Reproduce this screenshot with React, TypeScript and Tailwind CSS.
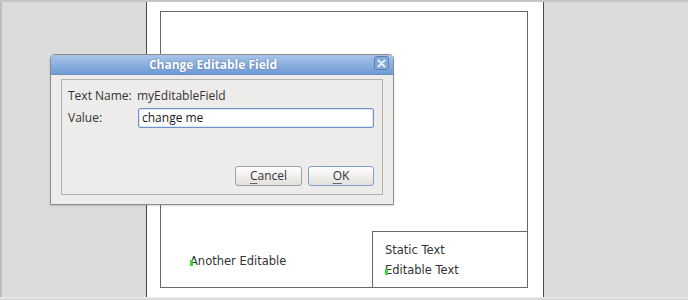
export default function App() {
  return (
    <div className="relative w-[688px] h-[300px] overflow-hidden bg-[#dcdcdc] font-['DejaVu_Sans',sans-serif]">
      {/* top frame line */}
      <div className="h-[2px] bg-[#c6c6c6]" />

      <div className="flex h-[295px]">
        {/* left canvas margin */}
        <div className="w-[146px] border-l-2 border-[#bdbdbd] bg-[#dcdcdc]" />

        {/* page */}
        <div className="w-[398px] border-x border-[#4a4a4a] bg-white">
          <div className="mt-[9px] ml-[13px] w-[368px] h-[277px] border border-[#666] flex flex-col">
            <div className="flex-1" />
            <div className="flex h-[56px]">
              <div className="flex-1 pl-[29px] pt-[20px] text-[11.5px] leading-[20px] text-[#333]">
                <span className="relative">
                  <span className="absolute left-0 top-[6px] w-[3px] h-[6px] bg-[#3fd43f]" />
                  Another Editable
                </span>
              </div>
              <div className="w-[155px] border-l border-t border-[#666] pl-[12px] pt-[8px] text-[11.5px] leading-[20px] text-[#333]">
                <div>Static Text</div>
                <div>
                  <span className="relative">
                    <span className="absolute left-0 top-[6px] w-[3px] h-[6px] bg-[#3fd43f]" />
                    Editable Text
                  </span>
                </div>
              </div>
            </div>
          </div>
        </div>

        {/* right canvas margin */}
        <div className="flex-1 bg-[#dcdcdc]" />
      </div>

      {/* bottom frame line */}
      <div className="h-[1px] bg-[#ececec]" />

      {/* dialog window */}
      <div className="absolute left-[50px] top-[54px] w-[344px] h-[151px] rounded-t-[5px] border border-[#8c8c8c] bg-[#edeceb] shadow-[0_1px_2px_rgba(0,0,0,0.15)] font-['Open_Sans',sans-serif]">
        <div className="relative h-[20px] rounded-t-[4px] bg-gradient-to-b from-[#a9c5ea] to-[#6f9bd5] border-b border-[#6a8fc2] flex items-center">
          <div className="w-[324px] text-center text-[12px] font-bold text-white [text-shadow:0_0_2px_rgba(40,70,120,0.6)]">
            Change Editable Field
          </div>
          <div className="absolute right-[4px] top-[1px] w-[15px] h-[14px] rounded-[3px] border border-[#5a7fb4] bg-[#86a9db] flex items-center justify-center">
            <svg width="9" height="9" viewBox="0 0 9 9">
              <path d="M1.5 1.5 L7.5 7.5 M7.5 1.5 L1.5 7.5" stroke="#e8f0fb" strokeWidth="1.8" strokeLinecap="round" />
            </svg>
          </div>
        </div>

        <div className="px-[10px] pt-[4px]">
          <div className="h-[116px] border border-[#b4b2ae] px-[6px] pt-[8px] text-[12px] text-[#333]">
            <div className="flex h-[16px] items-center">
              <span className="w-[69px] shrink-0">Text Name:</span>
              <span>myEditableField</span>
            </div>
            <div className="mt-[4px] flex items-center">
              <span className="w-[70px] shrink-0">Value:</span>
              <div className="w-[236px] h-[20px] rounded-[2px] border border-[#6f93c6] bg-white pl-[3px] leading-[18px] text-[#1a1a1a] shadow-[inset_0_0_0_1px_#dce7f5]">
                change me
              </div>
            </div>
            <div className="mt-[38px] flex justify-end gap-[6px] pr-[2px]">
              <button className="w-[67px] h-[20px] rounded-[3px] border border-[#a3a19d] bg-gradient-to-b from-white to-[#e2e0dc] text-[12px] leading-[18px] text-[#333]">
                <span className="underline underline-offset-[3px] decoration-[#666]">C</span>ancel
              </button>
              <button className="w-[66px] h-[20px] rounded-[3px] border border-[#7d9fd0] bg-gradient-to-b from-white to-[#e2e0dc] text-[12px] leading-[18px] text-[#333]">
                <span className="underline underline-offset-[3px] decoration-[#666]">O</span>K
              </button>
            </div>
          </div>
        </div>
      </div>
    </div>
  );
}
